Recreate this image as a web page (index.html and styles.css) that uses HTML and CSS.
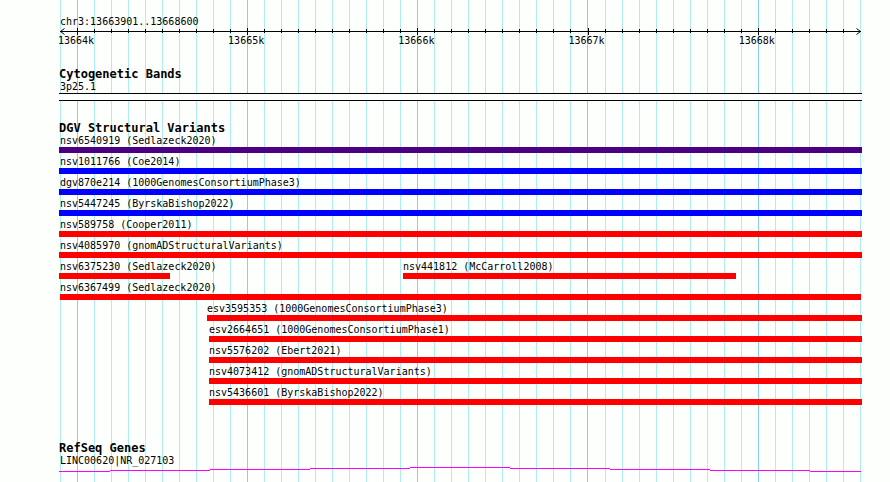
FILE: index.html
```
<!DOCTYPE html>
<html lang="en">
<head>
	<meta charset="utf-8">
	<title>chr3:13663901..13668600</title>
	<link rel="stylesheet" href="styles.css">
</head>
<body>
<main class="browser">
	<div class="gridlines" id="gridlines"></div>

	<section class="ruler">
		<div class="label">chr3:13663901..13668600</div>
		<div class="axis" id="axis">
			<svg class="arrow arrow-left" width="5" height="7" viewBox="0 0 5 7"><path d="M4.5 0.5L0.5 3.5L4.5 6.5"/></svg>
			<svg class="arrow arrow-right" width="5" height="7" viewBox="0 0 5 7"><path d="M0.5 0.5L4.5 3.5L0.5 6.5"/></svg>
		</div>
	</section>

	<section class="track">
		<h2>Cytogenetic Bands</h2>
		<div class="label">3p25.1</div>
		<div class="band"></div>
	</section>

	<section class="track variants">
		<h2>DGV Structural Variants</h2>
		<div class="row">
			<div class="feature" style="width:100%"><div class="label">nsv6540919 (Sedlazeck2020)</div><div class="bar complex"></div></div>
		</div>
		<div class="row">
			<div class="feature" style="width:100%"><div class="label">nsv1011766 (Coe2014)</div><div class="bar gain"></div></div>
		</div>
		<div class="row">
			<div class="feature" style="width:100%"><div class="label">dgv870e214 (1000GenomesConsortiumPhase3)</div><div class="bar gain"></div></div>
		</div>
		<div class="row">
			<div class="feature" style="width:100%"><div class="label">nsv5447245 (ByrskaBishop2022)</div><div class="bar gain"></div></div>
		</div>
		<div class="row">
			<div class="feature" style="width:100%"><div class="label">nsv589758 (Cooper2011)</div><div class="bar loss"></div></div>
		</div>
		<div class="row">
			<div class="feature" style="width:100%"><div class="label">nsv4085970 (gnomADStructuralVariants)</div><div class="bar loss"></div></div>
		</div>
		<div class="row">
			<div class="feature" style="width:13.82%"><div class="label">nsv6375230 (Sedlazeck2020)</div><div class="bar loss"></div></div>
			<div class="feature inside" style="margin-left:29.02%;width:41.47%"><div class="label">nsv441812 (McCarroll2008)</div><div class="bar loss"></div></div>
		</div>
		<div class="row">
			<div class="feature inside" style="margin-left:0.12%;width:99.75%"><div class="label">nsv6367499 (Sedlazeck2020)</div><div class="bar loss"></div></div>
		</div>
		<div class="row">
			<div class="feature inside" style="margin-left:18.43%;width:81.57%"><div class="label">esv3595353 (1000GenomesConsortiumPhase3)</div><div class="bar loss"></div></div>
		</div>
		<div class="row">
			<div class="feature inside" style="margin-left:18.68%;width:81.32%"><div class="label">esv2664651 (1000GenomesConsortiumPhase1)</div><div class="bar loss"></div></div>
		</div>
		<div class="row">
			<div class="feature inside" style="margin-left:18.68%;width:81.32%"><div class="label">nsv5576202 (Ebert2021)</div><div class="bar loss"></div></div>
		</div>
		<div class="row">
			<div class="feature inside" style="margin-left:18.68%;width:81.32%"><div class="label">nsv4073412 (gnomADStructuralVariants)</div><div class="bar loss"></div></div>
		</div>
		<div class="row">
			<div class="feature inside" style="margin-left:18.68%;width:81.32%"><div class="label">nsv5436601 (ByrskaBishop2022)</div><div class="bar loss"></div></div>
		</div>
	</section>

	<section class="track genes">
		<h2>RefSeq Genes</h2>
		<div class="label">LINC00620|NR_027103</div>
		<svg class="intron" viewBox="0 0 803 5" preserveAspectRatio="none">
			<path d="M0 4H51V5H0ZM51 3H151V4H51ZM151 2H251V3H151ZM251 1H351V2H251ZM351 0H451V1H351ZM451 1H551V2H451ZM551 2H651V3H551ZM651 3H751V4H651ZM751 4H802V5H751Z"/>
		</svg>
	</section>
</main>
<script src="script.js"></script>
</body>
</html>
```

FILE: styles.css
```
body {
  margin: 0;
  background-color: #fdfffc;
  color: black;
  font-family: "DejaVu Sans Mono", "Liberation Mono", monospace;
  font-size: 10px;
}

.browser {
  position: relative;
  box-sizing: border-box;
  min-height: 100vh;
  margin: 0 28px 0 59px;
  padding-top: 15px;
}

/* Vertical lines behind all tracks */
.gridlines {
  position: absolute;
  top: 0;
  bottom: 0;
  left: 0;
  right: 0;
  z-index: -1;
}

.gridlines div {
  position: absolute;
  top: 0;
  bottom: 0;
  width: 1px;
  background-color: #afeeee;
}

.gridlines .major {
  background-color: #87ceeb;
}

h2 {
  margin: 0 0 -1px 0;
  padding-top: 1px;
  font-size: 12px;
  line-height: 14px;
}

.label {
  padding-left: 1px;
  line-height: 13px;
  white-space: nowrap;
}

/* Ruler */
.axis {
  position: relative;
  height: 19px;
  margin: 3px 1px 0 1px;
  border-top: 1px solid black;
}

.tick {
  position: absolute;
  top: -3px;
  width: 1px;
  height: 4px;
  background-color: black;
}

.tick.major {
  top: -4px;
  height: 7px;
}

.tick span {
  position: absolute;
  top: 6px;
  left: -19px;
  line-height: 13px;
}

.arrow {
  position: absolute;
  top: -4px;
  fill: none;
  stroke: black;
}

.arrow-left {
  left: 0;
}

.arrow-right {
  right: 0;
}

/* Tracks */
.ruler {
  margin-bottom: 15px;
}

.band {
  height: 6px;
  border-top: 1px solid black;
  border-bottom: 1px solid black;
  background-color: white;
}

.variants {
  margin-top: 19px;
}

.genes {
  margin-top: 35px;
}

.row {
  display: flex;
  margin-bottom: 2px;
}

.feature {
  flex-shrink: 0;
}

.inside .label {
  padding-left: 0;
}

.bar {
  height: 6px;
}

.complex {
  background-color: #4b0082;
}

.gain {
  background-color: blue;
}

.loss {
  background-color: red;
}

.intron {
  display: block;
  width: 100%;
  height: 5px;
  fill: magenta;
  shape-rendering: crispEdges;
}
```

FILE: script.js
```
var first = 13663900, last = 13668600;
var gridlines = document.getElementById("gridlines");
var axis = document.getElementById("axis");
var bp, line, tick, label;

function position(bp, start, span) {
	return (bp - start) / span * 100 + "%";
}

for (bp = first; bp <= last; bp += 100) {
	line = document.createElement("div");
	line.style.left = position(bp, 13663894.9, 4718);
	if (bp % 1000 == 0) {
		line.className = "major";
	}
	gridlines.appendChild(line);

	if (bp > first && bp < last) {
		tick = document.createElement("div");
		tick.className = "tick";
		tick.style.left = position(bp, 13663900.7, 4706.2);
		if (bp % 1000 == 0) {
			tick.className = "tick major";
			label = document.createElement("span");
			label.textContent = bp / 1000 + "k";
			tick.appendChild(label);
		}
		axis.appendChild(tick);
	}
}
```
